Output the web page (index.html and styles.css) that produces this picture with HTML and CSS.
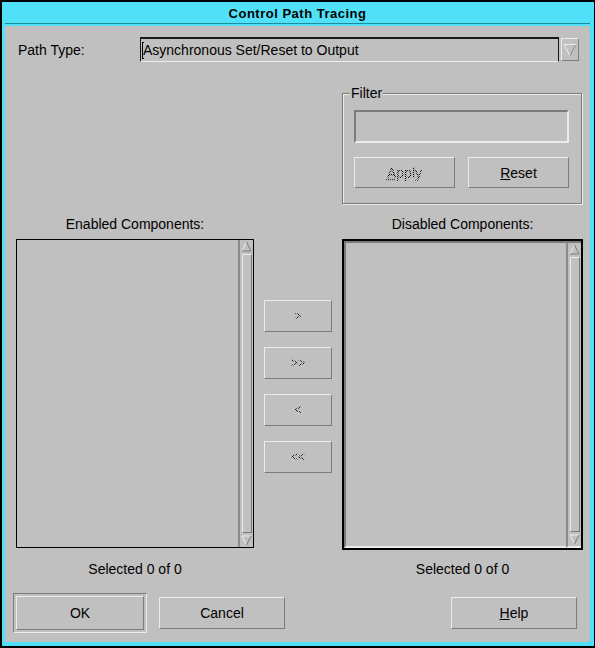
FILE: index.html
```html
<!DOCTYPE html>
<html lang="en">
<head>
    <meta charset="UTF-8">
    <title>Control Path Tracing</title>
    <link rel="stylesheet" href="styles.css">
</head>
<body>
    <div class="window">
        <div class="titlebar">Control Path Tracing</div>
        <div class="content">
            <div class="path-row">
                <span class="path-label">Path Type:</span>
                <div class="combo"><span class="caret"></span>Asynchronous Set/Reset to Output</div>
                <div class="combo-arrow">
                    <svg width="16" height="21" viewBox="0 0 16 21">
                        <polyline points="2,5.5 14,5.5" stroke="#ececec" fill="none"/>
                        <polyline points="2.5,6 8,17" stroke="#ececec" fill="none"/>
                        <polyline points="13.5,6 8,17" stroke="#8a8a8a" fill="none"/>
                    </svg>
                </div>
            </div>

            <fieldset class="filter">
                <legend>Filter</legend>
                <div class="filter-input"></div>
                <div class="filter-buttons">
                    <div class="btn filter-btn"><span class="stipple"><u>A</u>pply</span></div>
                    <div class="btn filter-btn"><u>R</u>eset</div>
                </div>
            </fieldset>

            <div class="lists">
                <div class="col-label">Enabled Components:</div>
                <div></div>
                <div class="col-label">Disabled Components:</div>

                <div class="list list-enabled">
                    <div class="list-body"></div>
                    <div class="scrollbar">
                        <svg class="arrow" width="11" height="11" viewBox="0 0 11 11">
                            <polyline points="1,10 5.5,1" stroke="#ececec" fill="none"/>
                            <polyline points="5.5,1 10,10 1,10" stroke="#7b7b7b" fill="none"/>
                        </svg>
                        <div class="thumb"></div>
                        <svg class="arrow" width="11" height="11" viewBox="0 0 11 11">
                            <polyline points="1,1 10,1" stroke="#ececec" fill="none"/>
                            <polyline points="1,1 5.5,10" stroke="#ececec" fill="none"/>
                            <polyline points="10,1 5.5,10" stroke="#7b7b7b" fill="none"/>
                        </svg>
                    </div>
                </div>

                <div class="mover">
                    <div class="btn move-btn"><span class="stipple">&gt;</span></div>
                    <div class="btn move-btn"><span class="stipple">&gt;&gt;</span></div>
                    <div class="btn move-btn"><span class="stipple">&lt;</span></div>
                    <div class="btn move-btn"><span class="stipple">&lt;&lt;</span></div>
                </div>

                <div class="list list-disabled">
                    <div class="list-body"></div>
                    <div class="scrollbar">
                        <svg class="arrow" width="11" height="11" viewBox="0 0 11 11">
                            <polyline points="1,10 5.5,1" stroke="#ececec" fill="none"/>
                            <polyline points="5.5,1 10,10 1,10" stroke="#7b7b7b" fill="none"/>
                        </svg>
                        <div class="thumb"></div>
                        <svg class="arrow" width="11" height="11" viewBox="0 0 11 11">
                            <polyline points="1,1 10,1" stroke="#ececec" fill="none"/>
                            <polyline points="1,1 5.5,10" stroke="#ececec" fill="none"/>
                            <polyline points="10,1 5.5,10" stroke="#7b7b7b" fill="none"/>
                        </svg>
                    </div>
                </div>

                <div class="caption">Selected 0 of 0</div>
                <div></div>
                <div class="caption">Selected 0 of 0</div>
            </div>

            <div class="actions">
                <div class="default-frame">
                    <div class="btn action-btn ok-btn">OK</div>
                </div>
                <div class="btn action-btn cancel-btn">Cancel</div>
                <div class="btn action-btn help-btn"><u>H</u>elp</div>
            </div>
        </div>
    </div>
</body>
</html>
```

FILE: styles.css
```css
body {
    margin: 0;
    padding: 0;
    background-color: #000;
    font-family: "Liberation Sans", Arial, sans-serif;
    font-size: 14px;
    color: #000;
}
.window {
    width: 595px;
    height: 648px;
    box-sizing: border-box;
    display: flex;
    flex-direction: column;
    background-color: #50e0f8;
    border-top: 2px solid #000;
    border-left: 2px solid #000;
    border-right: 1px solid #000;
    border-bottom: 2px solid #000;
    padding: 0 4px 4px 3px;
}
.titlebar {
    height: 21px;
    line-height: 23px;
    border-bottom: 1px solid #1f8c9e;
    margin-bottom: 2px;
    text-align: center;
    font-weight: bold;
    font-size: 13px;
    letter-spacing: 0.5px;
}
.content {
    flex: 1;
    background-color: #c0c0c0;
    padding-top: 11px;
    display: flex;
    flex-direction: column;
}

/* path type row */
.path-row {
    display: flex;
    align-items: center;
    height: 25px;
    padding-left: 13px;
}
.path-label {
    width: 122px;
}
.combo {
    width: 419px;
    height: 25px;
    box-sizing: border-box;
    border-style: solid;
    border-width: 2px 1px 1px 1px;
    border-color: #1a1a1a #1a1a1a #ececec #1a1a1a;
    display: flex;
    align-items: center;
    padding-left: 1px;
}
.caret {
    display: inline-block;
    width: 2px;
    height: 17px;
    border-left: 1px solid #000;
    border-top: 1px solid #000;
    border-bottom: 1px solid #000;
    box-sizing: border-box;
    margin-right: -1px;
}
.combo-arrow {
    width: 18px;
    height: 23px;
    box-sizing: border-box;
    margin-left: 2px;
    border: 1px solid;
    border-color: #ececec #7b7b7b #7b7b7b #ececec;
    display: flex;
    align-items: center;
    justify-content: center;
}

/* filter group */
.filter {
    margin: 23px 0 0 337px;
    width: 240px;
    box-sizing: border-box;
    min-inline-size: 0;
    padding: 9px 12px 15px 11px;
    border: 1px solid #7b7b7b;
    box-shadow: inset 1px 1px 0 #ececec, 1px 1px 0 #ececec;
}
.filter legend {
    padding: 0 1px;
    margin-left: -4px;
    line-height: 16px;
    background-color: #c0c0c0;
}
.filter-input {
    height: 33px;
    box-sizing: border-box;
    border: 2px solid;
    border-color: #7b7b7b #ececec #ececec #7b7b7b;
}
.filter-buttons {
    display: flex;
    justify-content: space-between;
    margin-top: 14px;
}
.btn {
    box-sizing: border-box;
    border: 1px solid;
    border-color: #ececec #7b7b7b #7b7b7b #ececec;
    display: flex;
    align-items: center;
    justify-content: center;
}
.filter-btn {
    width: 101px;
    height: 31px;
}
.stipple {
    background: repeating-conic-gradient(#000 0 25%, transparent 0 50%) 0 0 / 2px 2px;
    -webkit-background-clip: text;
    background-clip: text;
    color: transparent;
}
.stipple u {
    text-decoration-color: #444;
    text-decoration-style: dotted;
}

/* component lists */
.lists {
    display: grid;
    grid-template-columns: 238px 88px 241px;
    grid-template-rows: auto 311px auto;
    margin: 12px 0 0 11px;
}
.col-label {
    text-align: center;
    line-height: 16px;
    padding-bottom: 7px;
}
.list {
    display: flex;
    box-sizing: border-box;
}
.list-enabled {
    height: 309px;
    border: 1px solid #000;
}
.list-disabled {
    height: 311px;
    border: 2px solid #000;
}
.list-disabled .list-body {
    border-top: 2px solid #7b7b7b;
    border-left: 2px solid #7b7b7b;
    border-bottom: 2px solid #ececec;
}
.list-body {
    flex: 1;
}
.scrollbar {
    width: 15px;
    box-sizing: border-box;
    border-left: 2px solid #8a8a8a;
    padding: 1px 1px;
    display: flex;
    flex-direction: column;
    align-items: center;
}
.list-disabled .scrollbar {
    border-bottom: 2px solid #ececec;
    border-top: 2px solid #7b7b7b;
}
.arrow {
    flex: none;
}
.thumb {
    flex: 1;
    width: 10px;
    box-sizing: border-box;
    margin: 2px 0;
    border: 1px solid;
    border-color: #ececec #7b7b7b #7b7b7b #ececec;
}
.mover {
    display: flex;
    flex-direction: column;
    align-items: center;
    gap: 15px;
    padding-top: 61px;
}
.move-btn {
    width: 68px;
    height: 32px;
    font-size: 12px;
}
.caption {
    text-align: center;
    line-height: 16px;
    padding-top: 11px;
}

/* bottom buttons */
.actions {
    display: flex;
    align-items: center;
    margin-top: 16px;
    padding: 0 13px 0 8px;
}
.default-frame {
    border: 1px solid;
    border-color: #7b7b7b #ececec #ececec #7b7b7b;
    padding: 2px;
}
.action-btn {
    width: 126px;
    height: 32px;
}
.ok-btn {
    width: 128px;
    height: 34px;
}
.cancel-btn {
    margin-left: 12px;
}
.help-btn {
    margin-left: auto;
}
```
